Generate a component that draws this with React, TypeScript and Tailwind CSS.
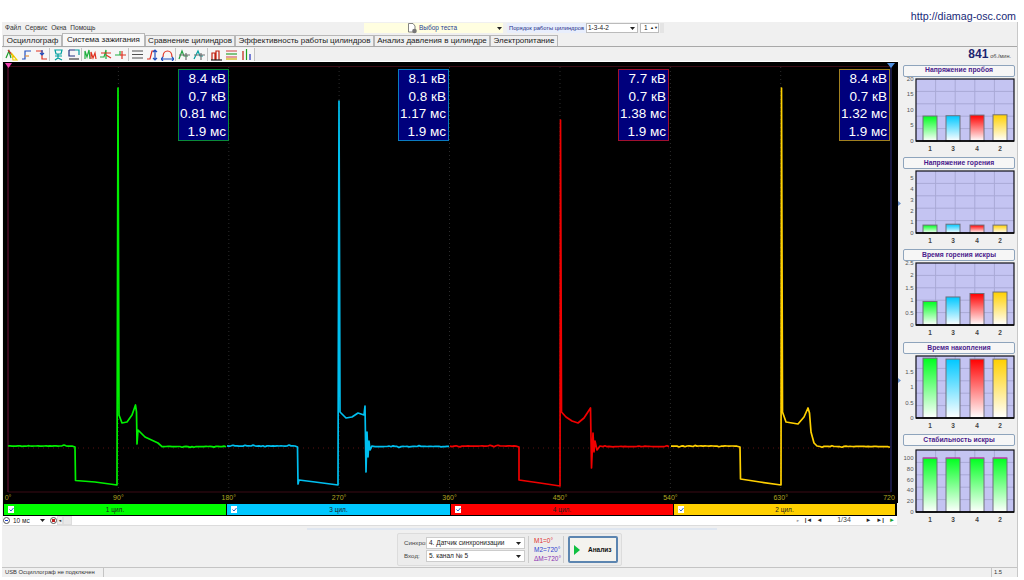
import React from 'react';

const TABS = [
  { label: 'Осциллограф', w: 'w-[59px]' },
  { label: 'Система зажигания', w: 'w-[83px]', active: true },
  { label: 'Сравнение цилиндров', w: 'w-[90px]' },
  { label: 'Эффективность работы цилиндров', w: 'w-[139px]' },
  { label: 'Анализ давления в цилиндре', w: 'w-[116px]' },
  { label: 'Электропитание', w: 'w-[68px]' },
];

const CHANNELS = [
  { label: '1 цил.', bg: 'bg-[#00ff00]', w: 'w-[222px]' },
  { label: '3 цил.', bg: 'bg-[#00c8ff]', w: 'w-[223px]' },
  { label: '4 цил.', bg: 'bg-[#ff0000]', w: 'w-[222px]' },
  { label: '2 цил.', bg: 'bg-[#ffd000]', w: 'w-[221px]' },
];

// small toolbar glyphs, 13x13 box, [colour, path]
const ICONS: [string, string][][] = [
  [['#1c9c2c', 'M1 10L4 3L6 10'], ['#c03030', 'M3 2L9 9'], ['#f0d000', 'M7 6L12 12L8 12Z']],
  [['#2050c0', 'M2 11H5V3H11'], ['#e09040', 'M5 8H9']],
  [['#e03020', 'M1 3H7V11H12'], ['#2050c0', 'M7 2V7M5 5L7 7L9 5']],
  [['#00a0a0', 'M3 2H10L9 6H4ZM6 6V10M3 8H10M3 12L6 10L10 12']],
  [['#203080', 'M2 2H8M2 2V8H8'], ['#00a0a0', 'M8 2H12V7'], ['#404040', 'M2 11H12']],
  [['#20b040', 'M1 11V3L3 9L5 2L6 11'], ['#e03020', 'M7 11V4L9 10L11 5L12 11']],
  [['#20b040', 'M1 9H5L7 2V11'], ['#e03020', 'M2 5H12M7 7L12 10']],
  [['#20b040', 'M1 7H6V3'], ['#e03020', 'M6 7H12M8 3V11']],
  [['#505050', 'M1 3H12M1 6.5H12M1 10H12']],
  [['#e03020', 'M1 11H4L6 3H10'], ['#2050c0', 'M9 2V12M7 4L9 2L11 4M7 10L9 12L11 10']],
  [['#e03020', 'M2 9C2 1 11 1 11 9'], ['#2050c0', 'M0 11H13M2 9L0 11L2 13M11 9L13 11L11 13']],
  [['#20a040', 'M1 11L4 3L6 8H10'], ['#707070', 'M1 7H12M8 5V12']],
  [['#00a0a0', 'M1 11L5 3L7 8H10'], ['#707070', 'M1 7H12M8 5V12']],
  [['#c02010', 'M2 12V5H5V12M6 12V3H9V12'], ['#202020', 'M1 12H12']],
  [['#d04040', 'M1 3H12M1 9H12'], ['#30a030', 'M1 6H12'], ['#d0b000', 'M1 11H12']],
  [['#c02010', 'M3 12V3'], ['#20a020', 'M6.5 12V1'], ['#2030c0', 'M10 12V6']],
];

const TRACE_GROUPS = [[0, 1, 2], [3, 4], [5, 6, 7], [8, 9, 10], [11, 12], [13, 14, 15]];

function noisy(x0: number, x1: number, y: number, seed: number) {
  const pts: string[] = [];
  for (let x = x0; x < x1; x += 2) {
    // cheap repeatable jitter, mostly flat with an odd small bump
    const r = Math.abs(Math.sin(x * 12.9898 + seed * 78.233) * 43758.5453) % 1;
    const n = r > 0.86 ? (r - 0.93) * 14 : (r - 0.43) * 0.5;
    pts.push(`${x},${(y + n).toFixed(1)}`);
  }
  return pts.join(' ');
}

const TRACES = [
  {
    color: '#00f000',
    pts: `${noisy(8, 74, 446, 1)} 75,447 75.5,480.5 95,482 117,485 118,88 119,415 122,423 127,422 132,415 135.5,405 136.5,412 137,444 138,430 145,437 158,443 ${noisy(162, 227, 446.5, 2)}`,
  },
  {
    color: '#00bfef',
    pts: `${noisy(227, 297, 446, 3)} 297.5,447 298,484 299,480 315,482 338,485 339,101 340,412 346,418 352,417 358,413 364,415 365,406 366,472 367,432 368,457 369,441 370,450 372,446 ${noisy(375, 450, 446.5, 4)}`,
  },
  {
    color: '#f00000',
    pts: `${noisy(450, 518, 446, 5)} 519,447 519,480 540,483 560,486 560.5,120 561.5,412 566,417 572,421 578,423 584,418 590.5,408 591.5,468 593,433 594,452 595,441 597,450 600,446 ${noisy(603, 671, 446.5, 6)}`,
  },
  {
    color: '#ffd000',
    pts: `${noisy(671, 739, 446, 7)} 740,447 740.5,479 760,482 781,485 781.5,88 782.5,412 786,422 798,424 804,417 808,408 809.5,413 811,432 814,443 817,446 ${noisy(820, 891, 446.5, 8)}`,
  },
];

const READOUTS = [
  { x: 'left-[175px]', border: 'border-[#0a8a3a]', rows: ['8.4 кВ', '0.7 кВ', '0.81 мс', '1.9 мс'] },
  { x: 'left-[395px]', border: 'border-[#0a7ac0]', rows: ['8.1 кВ', '0.8 кВ', '1.17 мс', '1.9 мс'] },
  { x: 'left-[615px]', border: 'border-[#a01030]', rows: ['7.7 кВ', '0.7 кВ', '1.38 мс', '1.9 мс'] },
  { x: 'left-[836px]', border: 'border-[#a08020]', rows: ['8.4 кВ', '0.7 кВ', '1.32 мс', '1.9 мс'] },
];

const GRID_X = [8, 118.4, 228.8, 339.1, 449.5, 560, 670.4, 780.7, 891];
const DEGREES = ['0°', '90°', '180°', '270°', '360°', '450°', '540°', '630°', '720'];

const CHARTS = [
  { title: 'Напряжение пробоя', top: 2, unit: 3.12, ticks: [['20', 20], ['15', 15], ['10', 10], ['5', 5], ['0', 0]], values: [8, 8.1, 8.3, 8.4] },
  { title: 'Напряжение горения', top: 2, unit: 11, ticks: [['5', 5], ['4', 4], ['3', 3], ['2', 2], ['1', 1], ['0', 0]], values: [0.72, 0.8, 0.72, 0.72] },
  { title: 'Время горения искры', top: 2, unit: 24.8, ticks: [['2.5', 2.5], ['2', 2], ['1.5', 1.5], ['1', 1], ['0.5', 0.5], ['0', 0]], values: [0.95, 1.13, 1.27, 1.33] },
  { title: 'Время накопления', top: 2, unit: 31, ticks: [['1.5', 1.5], ['1', 1], ['0.5', 0.5], ['0', 0]], values: [1.93, 1.9, 1.9, 1.9] },
  { title: 'Стабильность искры', top: 4, unit: 0.54, ticks: [['100', 100], ['80', 80], ['60', 60], ['40', 40], ['20', 20], ['0', 0]], values: [100, 100, 100, 100], allGreen: true },
];

const BAR_X = [20, 43, 67, 90];
const BAR_NAMES = ['1', '3', '4', '2'];
const BAR_COLORS = ['#00ff20', '#00c8ff', '#ff0000', '#ffd000'];

function Caret() {
  return (
    <svg width="5" height="3" viewBox="0 0 5 3" className="shrink-0">
      <path d="M0 0H5L2.5 3Z" fill="#222" />
    </svg>
  );
}

function Bar({ chart, id }: { chart: (typeof CHARTS)[number]; id: number }) {
  const plotH = 62;
  const bottom = chart.top + plotH;
  return (
    <svg width="113" height="79" viewBox="0 0 113 79" className="block">
      <defs>
        {BAR_COLORS.map((c, i) => (
          <linearGradient key={c} id={`g${id}-${i}`} x1="0" y1="0" x2="0" y2="1">
            <stop offset="0" stopColor={chart.allGreen ? BAR_COLORS[0] : c} />
            <stop offset="1" stopColor="#ffffff" />
          </linearGradient>
        ))}
      </defs>
      <rect x="13" y={chart.top} width="98" height={plotH} fill="#c4c4f2" />
      {[0.2, 0.4, 0.6, 0.8].map((f) => (
        <path key={f} d={`M${13 + 98 * f} ${chart.top}V${bottom}M13 ${chart.top + plotH * f}H111`} stroke="#a9a9d6" strokeWidth="1" />
      ))}
      {chart.values.map((v, i) => {
        const h = v * chart.unit;
        return (
          <g key={i}>
            <rect x={BAR_X[i]} y={bottom - h} width="14" height={h} fill={`url(#g${id}-${i})`} stroke="#6f6f7a" strokeWidth="1" />
            {chart.allGreen && <path d={`M${BAR_X[i]} ${bottom - h}h14`} stroke="#e020c0" strokeWidth="1" />}
          </g>
        );
      })}
      <rect x="13" y={chart.top} width="98" height={plotH} fill="none" stroke="#101018" strokeWidth="1.2" />
      <path d={`M13 ${bottom}H111`} stroke="#000" strokeWidth="1.6" />
      {chart.ticks.map(([label, v]) => (
        <text key={label} x="10.5" y={bottom - (v as number) * chart.unit + 2} textAnchor="end" fontSize="6" fill="#555">
          {label}
        </text>
      ))}
      {BAR_NAMES.map((n, i) => (
        <text key={n} x={BAR_X[i] + 7} y={bottom + 9.5} textAnchor="middle" fontSize="6.5" fontWeight="700" fill="#444">
          {n}
        </text>
      ))}
    </svg>
  );
}

function Scope() {
  return (
    <div className="relative h-[441px] bg-black">
      <svg width="894" height="441" viewBox="3 62 894 441" className="block">
        {GRID_X.slice(1, 8).map((x) => (
          <path key={x} d={`M${x} 67V492`} stroke="#2c2c2c" strokeWidth="1" strokeDasharray="1 3" />
        ))}
        <path d="M8 448H891" stroke="#5a1010" strokeWidth="1" strokeDasharray="1 4" />
        <path d="M8 66.5H891M8 492H891" stroke="#3a0a14" strokeWidth="1.2" />
        <path d="M8 63V492" stroke="#5c1030" strokeWidth="1.2" />
        <path d="M891 63V492" stroke="#2a2a70" strokeWidth="1.2" />
        <path d="M5 63H12L8.5 68Z" fill="#f040b0" />
        <path d="M887 63H895L891 68Z" fill="#5090e0" />
        {TRACES.map((t) => (
          <polyline key={t.color} points={t.pts} fill="none" stroke={t.color} strokeWidth="1.7" strokeLinejoin="round" />
        ))}
        {DEGREES.map((d, i) => (
          <text
            key={d}
            x={i === 0 ? 8 : Math.min(GRID_X[i], 889)}
            y="500"
            textAnchor="middle"
            fontSize="7"
            fill="#b0a420"
          >
            {d}
          </text>
        ))}
      </svg>
      {READOUTS.map((r) => (
        <div
          key={r.x}
          className={`absolute top-[7px] ${r.x} w-[51px] h-[72px] bg-[#00007c] border ${r.border} pr-[2px] text-right text-white text-[13.5px] leading-[17.7px] whitespace-nowrap`}
        >
          {r.rows.map((row) => (
            <div key={row}>{row}</div>
          ))}
        </div>
      ))}
      {/* splitter arrows sitting just off the plot edge */}
      <svg width="3" height="5" viewBox="0 0 3 5" className="absolute -right-[3px] top-[139px]">
        <path d="M0 0L3 2.5L0 5Z" fill="#6a90c8" />
      </svg>
      <svg width="3" height="5" viewBox="0 0 3 5" className="absolute -right-[3px] top-[316px]">
        <path d="M0 0L3 2.5L0 5Z" fill="#6a90c8" />
      </svg>
    </div>
  );
}

export default function App() {
  return (
    <div className="w-[1024px] h-[580px] bg-white overflow-hidden font-['Liberation_Sans',Arial,sans-serif] text-[#222]">
      {/* Site link */}
      <div className="h-[22px] flex items-end justify-end pr-[8px] text-[10.7px] leading-[11px] text-[#202a78]">
        http://diamag-osc.com
      </div>

      <div className="ml-[2px] w-[1016px] h-[555px] bg-[#f0f0f0] border-r border-[#c8c8c8] flex flex-col">
        {/* Menu and test selectors */}
        <div className="h-[12px] flex items-center relative">
          <div className="flex w-[362px] pl-[3px] gap-[4px] text-[6.5px] text-[#333]">
            <span>Файл</span>
            <span>Сервис</span>
            <span>Окна</span>
            <span>Помощь</span>
          </div>
          <div className="w-[139px] h-[10px] bg-[#fffee0] flex items-center pl-[43px] pr-[1px]">
            <svg width="11" height="11" viewBox="0 0 11 11" className="shrink-0">
              <path d="M1.5 .5H6L8 3V9H1.5Z" fill="#fff" stroke="#666" strokeWidth=".8" />
              <circle cx="7.5" cy="8" r="2.3" fill="#777" />
            </svg>
            <span className="ml-px text-[6.5px] text-[#2a3f90]">Выбор теста</span>
            <span className="ml-auto">
              <Caret />
            </span>
          </div>
          <div className="ml-[4px] w-[79px] h-[10px] bg-[#e8eefc] flex items-center justify-center text-[5.8px] text-[#1c2f88] whitespace-nowrap">
            Порядок работы цилиндров
          </div>
          <div className="w-[52px] h-[10px] bg-white border border-[#bbb] flex items-center justify-between pl-px pr-[2px] text-[6.5px]">
            1-3-4-2
            <Caret />
          </div>
          <div className="ml-[2px] w-[19px] h-[10px] bg-white border border-[#bbb] flex items-center justify-between px-[3px] text-[6.5px]">
            1
            <span className="text-[4px] leading-[4px] w-[5px]">▲▼</span>
          </div>
          <div className="ml-px w-[4px] h-[10px] bg-[#e4e4e4]" />
        </div>

        {/* Tabs */}
        <div className="h-[13px] flex items-end pl-px border-b border-[#a8a8a8]">
          {TABS.map((t) => (
            <div
              key={t.label}
              className={`${t.w} shrink-0 flex items-center justify-center border border-b-0 border-[#b8b8b8] whitespace-nowrap text-[8px] ${
                t.active ? 'h-[13px] bg-[#f8f8f8]' : 'h-[11px] bg-[#f0f0f0]'
              }`}
            >
              {t.label}
            </div>
          ))}
        </div>

        <div className="flex-1 flex min-h-0">
          {/* Oscillogram column */}
          <div className="w-[896px] pl-px flex flex-col">
            <div className="h-[15px] flex items-center border-b border-white">
              {TRACE_GROUPS.map((group, g) => (
                <div key={g} className="flex items-center h-[13px] border-r border-[#c4c4c4] bg-[#f6f6f6] px-[1.5px] gap-[2px]">
                  {group.map((n) => (
                    <svg key={n} width="13" height="13" viewBox="0 0 13 13" className="block">
                      {ICONS[n].map(([color, d]) => (
                        <path key={d} d={d} fill="none" stroke={color} strokeWidth="1.2" />
                      ))}
                    </svg>
                  ))}
                </div>
              ))}
            </div>

            <Scope />

            {/* Cylinder channels */}
            <div className="w-[894px] h-[13px] flex bg-black py-px pl-px gap-[1px]">
              {CHANNELS.map((c) => (
                <div key={c.label} className={`${c.w} ${c.bg} relative flex items-center justify-center text-[6.5px] text-[#222]`}>
                  <span className="absolute left-[4px] top-[2px] w-[6px] h-[7px] bg-white flex items-center justify-center">
                    <svg width="5" height="5" viewBox="0 0 5 5">
                      <path d="M.5 2.5L2 4L4.5 1" fill="none" stroke="#2060d0" strokeWidth="1" />
                    </svg>
                  </span>
                  {c.label}
                </div>
              ))}
            </div>

            {/* Time base and pager */}
            <div className="w-[894px] h-[10px] bg-white border-b border-[#dcdcdc] flex items-center text-[6.5px]">
              <span className="w-[7px] h-[7px] rounded-full border border-[#555] flex items-center justify-center">
                <span className="w-[3px] h-px bg-[#2040c0]" />
              </span>
              <span className="ml-[3px] w-[27px]">10 мс</span>
              <Caret />
              <span className="ml-[5px] w-[7px] h-[7px] rounded-full border border-[#555] flex items-center justify-center">
                <span className="w-[3px] h-[3px] bg-[#c02020]" />
              </span>
              <span className="w-[6px] h-[9px] bg-[#eee] border border-[#ddd] text-[4px] leading-[8px] text-center">◄</span>
              <span className="w-[9px] h-[9px] bg-[#e8e8e8] border border-[#ddd]" />
              <div className="ml-auto flex items-center gap-[2px] text-[6px] font-bold text-[#222]">
                <span className="w-[6px] text-[4px] text-[#999]">►</span>
                <span className="w-[9px] text-center">|◄</span>
                <span className="w-[9px] text-center">◄</span>
                <span className="w-[36px] text-center text-[7px] font-normal text-[#444]">1/34</span>
                <span className="w-[9px] text-center">►</span>
                <span className="w-[10px] text-center">►|</span>
                <span className="w-[10px] text-center text-[#10a030]">►</span>
              </div>
            </div>

            {/* Analysis controls */}
            <div className="mt-[2px] ml-[304px] w-[410px] h-[2px] bg-[#dfe6f0]" />
            <div className="mt-[3px] ml-[394px] w-[225px] h-[33px] bg-[#ececec] border border-[#dcdcdc] rounded-[2px] flex items-center text-[6.5px]">
              <div className="w-[130px] pl-[6px] flex flex-col gap-px">
                <div className="flex items-center">
                  <span className="w-[22px] text-[6.2px] text-[#444]">Синхро:</span>
                  <div className="w-[99px] h-[12px] bg-white border border-[#ccc] flex items-center justify-between pl-[2px] pr-[3px]">
                    4. Датчик синхронизации
                    <Caret />
                  </div>
                </div>
                <div className="flex items-center">
                  <span className="w-[22px] text-[6.2px] text-[#444]">Вход:</span>
                  <div className="w-[99px] h-[12px] bg-white border border-[#ccc] flex items-center justify-between pl-[2px] pr-[3px]">
                    5. канал № 5
                    <Caret />
                  </div>
                </div>
              </div>
              <div className="w-[34px] h-[27px] border-l border-[#ccc] pl-[5px] flex flex-col justify-between text-[6.5px] leading-[9px]">
                <span className="text-[#e03030]">М1=0°</span>
                <span className="text-[#2a3fd0]">М2=720°</span>
                <span className="text-[#8a30b0]">ΔМ=720°</span>
              </div>
              <div className="h-[27px] border-l border-[#ccc] ml-[1px] pl-[4px] flex items-center">
                <div className="w-[50px] h-[27px] bg-[#f4f3ee] border-2 border-[#5c85b0] rounded-[2px] flex items-center pl-[4px] gap-[8px]">
                  <svg width="6" height="10" viewBox="0 0 6 10">
                    <path d="M0 0L6 5L0 10Z" fill="#10c040" />
                  </svg>
                  <span className="text-[6.5px] font-bold text-[#111]">Анализ</span>
                </div>
              </div>
            </div>
          </div>

          {/* Cylinder statistics */}
          <div className="w-[119px] pl-[5px]">
            <div className="h-[16.5px] flex items-baseline justify-end gap-[2px] pr-[6px]">
              <span className="text-[12px] leading-[14px] font-bold text-[#1c2470]">841</span>
              <span className="text-[5.5px] text-[#444]">об./мин.</span>
            </div>
            {CHARTS.map((c, i) => (
              <div key={c.title} className="h-[92.4px] w-[113px] pt-px">
                <div className="h-[12px] w-[112px] bg-[#f6f6f6] border border-[#8ea4bc] rounded-[2px] flex items-center justify-center text-[6.8px] font-bold text-[#4a1a8c]">
                  {c.title}
                </div>
                <Bar chart={c} id={i} />
              </div>
            ))}
          </div>
        </div>

        {/* Status bar */}
        <div className="h-[10px] border-t border-[#c4c4c4] flex items-center text-[5.8px] text-[#333] whitespace-nowrap">
          <span className="w-[102px] pl-[3px] border-r border-[#c4c4c4]">USB Осциллограф не подключен</span>
          <span className="ml-auto w-[26px] pl-[2px] border-l border-[#c4c4c4]">1.5</span>
        </div>
      </div>
    </div>
  );
}
